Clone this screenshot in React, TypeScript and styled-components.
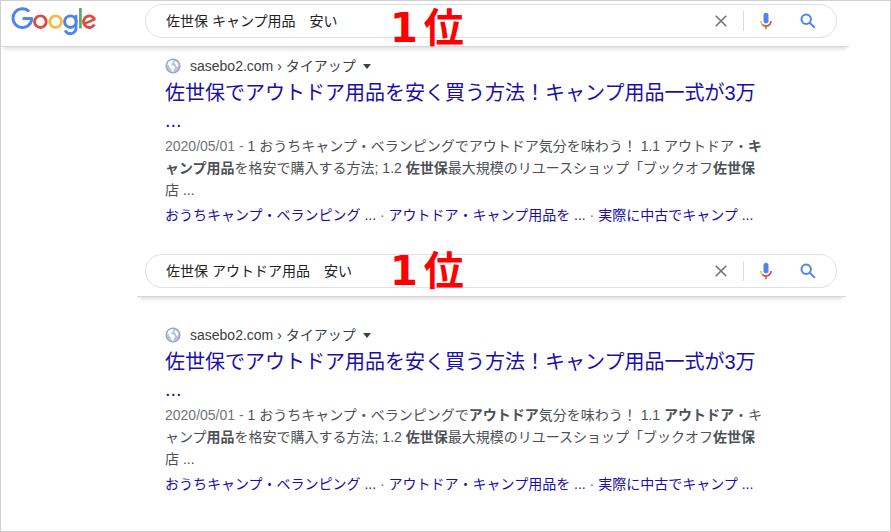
import React from "react";
import styled, { createGlobalStyle } from "styled-components";

const GlobalStyle = createGlobalStyle`
  *, *::before, *::after { box-sizing: border-box; }
  body {
    margin: 0;
    background: #fff;
    color: #4d5156;
    font-family: "Liberation Sans", "Noto Sans CJK JP", sans-serif;
    font-size: 14px;
  }
`;

const Page = styled.main`
  min-height: 100vh;
  border: 1px solid #d0d0d0;
`;

const Header = styled.header<{ $inset?: boolean }>`
  position: relative;
  display: flex;
  align-items: center;
  height: ${(p) => (p.$inset ? "47px" : "46px")};
  margin: ${(p) => (p.$inset ? "24px 44px 0 136px" : "0 41px 0 0")};
  padding: ${(p) => (p.$inset ? "0 9px 5px 8px" : "0 12px 6px 10px")};
  border-bottom: 1px solid #d6d6d6;
  box-shadow: 0 5px 4px -3px rgba(0, 0, 0, 0.14);
`;

const LogoLink = styled.a`
  display: flex;
  width: 134px;
  flex: none;
`;

const SearchForm = styled.form`
  display: flex;
  flex: 1;
  align-items: center;
  min-width: 0;
  height: 34px;
  padding: 0 17px 0 20px;
  border: 1px solid #dfe1e5;
  border-radius: 17px;
`;

const SearchInput = styled.input`
  flex: 1;
  min-width: 0;
  height: 28px;
  margin-bottom: 2px;
  padding: 0;
  border: 0;
  outline: 0;
  background: none;
  color: #202124;
  font: inherit;
`;

const IconButton = styled.button`
  display: grid;
  place-items: center;
  width: 22px;
  height: 30px;
  padding: 0;
  border: 0;
  background: none;
  cursor: pointer;
`;

const Divider = styled.span`
  width: 1px;
  height: 20px;
  margin: 0 11px;
  background: #dadce0;
`;

const SearchButton = styled(IconButton)`
  margin-left: 20px;
`;

const RankLabel = styled.strong<{ $inset?: boolean }>`
  position: absolute;
  top: ${(p) => (p.$inset ? "-5px" : "1px")};
  left: ${(p) => (p.$inset ? "253px" : "389px")};
  display: flex;
  gap: 6px;
  color: #f00;
  font-family: "DejaVu Sans", "Noto Sans CJK JP", sans-serif;
  font-size: 40px;
  font-weight: 700;
  line-height: 52px;
  pointer-events: none;
`;

const Result = styled.article<{ $spaced?: boolean }>`
  max-width: 800px;
  padding: ${(p) => (p.$spaced ? "27px" : "8px")} 0 0 164px;
`;

const Source = styled.div`
  display: flex;
  align-items: center;
  height: 22px;
  color: #3c4043;
  line-height: 22px;
`;

const SourceText = styled.cite`
  margin: 0 6px 0 9px;
  font-style: normal;
`;

const MenuButton = styled(IconButton)`
  width: 10px;
  height: 20px;
`;

const Title = styled.h3`
  margin: 3px 0 0;
  font-size: 20px;
  font-weight: 400;
  line-height: 27px;
  white-space: nowrap;
`;

const Link = styled.a`
  color: #1a0dab;
  text-decoration: none;
`;

const Snippet = styled.p`
  margin: 1px 0 0;
  line-height: 22px;
  white-space: nowrap;
`;

const PublishDate = styled.time`
  color: #70757a;
`;

const SiteLinks = styled.nav`
  margin-top: 3px;
  color: #70757a;
  line-height: 22px;
  white-space: nowrap;
`;

const Logo = () => (
  <svg width="88" height="32" viewBox="11 6 88 32" fill="none" strokeWidth="2.9">
    <g stroke="#4f83ee">
      <circle cx="22.4" cy="19.2" r="9.4" pathLength="360" strokeDasharray="315 45" />
      <line x1="22.6" y1="19.5" x2="32.6" y2="19.5" />
    </g>
    <circle cx="40.4" cy="22.7" r="5.8" stroke="#da4f40" />
    <circle cx="55.6" cy="22.7" r="5.8" stroke="#f3bd42" />
    <g stroke="#4f83ee">
      <circle cx="70.4" cy="22.7" r="5.8" />
      <line x1="76.1" y1="15.9" x2="76.1" y2="29.2" strokeWidth="2.6" />
      <circle cx="70.4" cy="29" r="5.7" pathLength="360" strokeDasharray="155 205" />
    </g>
    <line x1="80.4" y1="9" x2="80.4" y2="29.4" stroke="#58a65c" strokeWidth="2.6" />
    <g stroke="#da4f40">
      <circle cx="89.4" cy="22.7" r="5.8" pathLength="360" strokeDasharray="308 52" transform="rotate(30 89.4 22.7)" />
      <line x1="84.5" y1="24.6" x2="95.2" y2="20.2" strokeWidth="2.4" />
    </g>
  </svg>
);

const ClearIcon = () => (
  <svg width="12" height="12" viewBox="0 0 12 12" stroke="#70757a" strokeWidth="1.6">
    <path d="M.7.7l10.6 10.6M11.3.7L.7 11.3" />
  </svg>
);

const MicIcon = () => (
  <svg width="20" height="20" viewBox="0 0 24 24">
    <path fill="#4f83ee" d="M12 15c1.7 0 3-1.3 3-3V5c0-1.7-1.3-3-3-3S9 3.300 9 5v7c0 1.700 1.300 3 3 3z" />
    <path fill="#58a65c" d="M11 18.100h2V22h-2z" />
    <path fill="#f3bd42" d="M7 12H5c0 1.900.800 3.700 2 5l1.400-1.400C7.600 14.700 7 13.400 7 12z" />
    <path fill="#da4f40" d="M12 17c-1.400 0-2.700-.5-3.600-1.400L7 17c1.300 1.300 3 2.100 5 2.100 3.900 0 7-3.200 7-7.100h-2c0 2.800-2.200 5-5 5z" />
  </svg>
);

const SearchIcon = () => (
  <svg width="16" height="16" viewBox="0 0 16 16" fill="none" stroke="#4f83ee" strokeWidth="2">
    <circle cx="6.200" cy="6.200" r="4.700" />
    <path d="M9.600 9.600l5.200 5.200" />
  </svg>
);

const GlobeIcon = () => (
  <svg width="16" height="16" viewBox="0 0 16 16">
    <circle cx="8" cy="8" r="6.900" fill="#b9c3e0" stroke="#9aa3cc" strokeWidth="1.400" />
    <path fill="#fff" d="M3.500 3.800L6.500 2l2 .8-.6 1.700-1.600 1 .2 1.700 2.200.6 1.300 1.500-1 2.200-.8 2.300-1.500-.4-.5-2.500-1.700-1.600-.6-1.800-1.400-.7zM10 3l2.200 1.400 1.200 2.500-.8 2.300-1.500-1.100-.2-1.700-1.500-1.200z" />
  </svg>
);

const CaretIcon = () => (
  <svg width="8" height="5" viewBox="0 0 8 5">
    <path d="M0 0h8L4 5z" fill="#3c4043" />
  </svg>
);

const SearchBar = ({ query }: { query: string }) => (
  <SearchForm role="search" onSubmit={(e) => e.preventDefault()}>
    <SearchInput type="text" aria-label="検索" defaultValue={query} />
    <IconButton type="reset" aria-label="クリア"><ClearIcon /></IconButton>
    <Divider />
    <IconButton type="button" aria-label="音声検索"><MicIcon /></IconButton>
    <SearchButton type="submit" aria-label="検索"><SearchIcon /></SearchButton>
  </SearchForm>
);

const Rank = ({ inset }: { inset?: boolean }) => (
  <RankLabel $inset={inset}>
    <span>1</span>
    <span>位</span>
  </RankLabel>
);

const SearchResult = ({ spaced, children }: { spaced?: boolean; children: React.ReactNode }) => (
  <Result $spaced={spaced}>
    <Source>
      <GlobeIcon />
      <SourceText>sasebo2.com › タイアップ</SourceText>
      <MenuButton type="button" aria-label="メニュー"><CaretIcon /></MenuButton>
    </Source>
    <Title>
      <Link href="#result">
        佐世保でアウトドア用品を安く買う方法！キャンプ用品一式が3万<br />...
      </Link>
    </Title>
    <Snippet>
      <PublishDate dateTime="2020-05-01">2020/05/01 - </PublishDate>
      {children}
    </Snippet>
    <SiteLinks>
      <Link href="#camp">おうちキャンプ・ベランピング ...</Link>
      {" · "}
      <Link href="#outdoor">アウトドア・キャンプ用品を ...</Link>
      {" · "}
      <Link href="#used">実際に中古でキャンプ ...</Link>
    </SiteLinks>
  </Result>
);

export default function App() {
  return (
    <Page lang="ja">
      <GlobalStyle />
      <Header>
        <LogoLink href="#home" aria-label="Google"><Logo /></LogoLink>
        <SearchBar query="佐世保 キャンプ用品　安い" />
        <Rank />
      </Header>
      <SearchResult>
        1 おうちキャンプ・ベランピングでアウトドア気分を味わう！ 1.1 アウトドア・<b>キ</b><br />
        <b>ャンプ用品</b>を格安で購入する方法; 1.2 <b>佐世保</b>最大規模のリユースショップ「ブックオフ<b>佐世保</b><br />
        店 ...
      </SearchResult>
      <Header $inset>
        <SearchBar query="佐世保 アウトドア用品　安い" />
        <Rank inset />
      </Header>
      <SearchResult spaced>
        1 おうちキャンプ・ベランピングで<b>アウトドア</b>気分を味わう！ 1.1 <b>アウトドア</b>・キ<br />
        ャンプ<b>用品</b>を格安で購入する方法; 1.2 <b>佐世保</b>最大規模のリユースショップ「ブックオフ<b>佐世保</b><br />
        店 ...
      </SearchResult>
    </Page>
  );
}
